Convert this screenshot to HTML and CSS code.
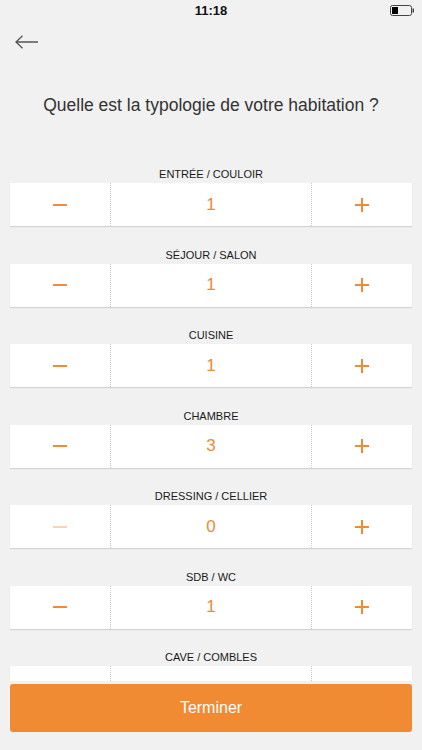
FILE: index.html
```html
<!DOCTYPE html>
<html lang="fr">

<head>
    <meta charset="UTF-8" />
    <meta name="viewport" content="width=device-width, initial-scale=1.0" />
    <title>Typologie</title>
    <link rel="stylesheet" href="styles.css">
</head>

<body>
    <div class="app">
        <!-- barre de statut -->
        <div class="status-bar">
            <span class="time">11:18</span>
            <svg class="battery" width="25" height="11" viewBox="0 0 25 11">
                <rect x="0.5" y="0.5" width="21" height="10" rx="2" fill="none" stroke="#444" stroke-width="1" />
                <rect x="2" y="2" width="6" height="7" fill="#000" />
                <rect x="22.5" y="3.5" width="1.5" height="4" fill="#444" />
            </svg>
        </div>

        <!-- navigation -->
        <div class="nav">
            <svg class="back" width="24" height="14" viewBox="0 0 24 14">
                <path d="M1 7 H23 M7.5 0.8 L1 7 L7.5 13.2" fill="none" stroke="#555" stroke-width="1.3" />
            </svg>
        </div>

        <h1 class="title">Quelle est la typologie de votre habitation ?</h1>

        <!-- liste des pièces -->
        <div class="list">
            <div class="group">
                <div class="label">ENTRÉE / COULOIR</div>
                <div class="stepper">
                    <div class="btn"><span class="minus"></span></div>
                    <div class="value">1</div>
                    <div class="btn"><span class="plus"></span></div>
                </div>
            </div>
            <div class="group">
                <div class="label">SÉJOUR / SALON</div>
                <div class="stepper">
                    <div class="btn"><span class="minus"></span></div>
                    <div class="value">1</div>
                    <div class="btn"><span class="plus"></span></div>
                </div>
            </div>
            <div class="group">
                <div class="label">CUISINE</div>
                <div class="stepper">
                    <div class="btn"><span class="minus"></span></div>
                    <div class="value">1</div>
                    <div class="btn"><span class="plus"></span></div>
                </div>
            </div>
            <div class="group">
                <div class="label">CHAMBRE</div>
                <div class="stepper">
                    <div class="btn"><span class="minus"></span></div>
                    <div class="value">3</div>
                    <div class="btn"><span class="plus"></span></div>
                </div>
            </div>
            <div class="group">
                <div class="label">DRESSING / CELLIER</div>
                <div class="stepper">
                    <div class="btn disabled"><span class="minus"></span></div>
                    <div class="value">0</div>
                    <div class="btn"><span class="plus"></span></div>
                </div>
            </div>
            <div class="group">
                <div class="label">SDB / WC</div>
                <div class="stepper">
                    <div class="btn"><span class="minus"></span></div>
                    <div class="value">1</div>
                    <div class="btn"><span class="plus"></span></div>
                </div>
            </div>
            <div class="group">
                <div class="label">CAVE / COMBLES</div>
                <div class="stepper">
                    <div class="btn disabled"><span class="minus"></span></div>
                    <div class="value">0</div>
                    <div class="btn"><span class="plus"></span></div>
                </div>
            </div>
        </div>

        <div class="footer">
            <button class="done">Terminer</button>
        </div>
    </div>
</body>

</html>
```

FILE: styles.css
```css
body {
    margin: 0;
    padding: 0;
    background-color: #f1f1f1;
    font-family: "Liberation Sans", Arial, sans-serif;
    color: #222;
}

.app {
    height: 750px;
    display: flex;
    flex-direction: column;
    overflow: hidden;
}

/* barre de statut */
.status-bar {
    height: 20px;
    flex: none;
    display: flex;
    justify-content: center;
    align-items: center;
    position: relative;
}

.time {
    font-size: 13px;
    font-weight: bold;
    color: #111;
}

.battery {
    position: absolute;
    right: 7px;
    top: 5px;
}

.nav {
    height: 44px;
    flex: none;
    display: flex;
    align-items: center;
    padding-left: 15px;
}

.title {
    flex: none;
    margin: 30px 0 0;
    font-size: 17.5px;
    line-height: 22px;
    font-weight: normal;
    text-align: center;
    color: #333;
}

/* liste */
.list {
    flex: 1;
    overflow: hidden;
    padding: 51px 10px 0;
}

.group {
    margin-bottom: 21.5px;
}

.label {
    font-size: 11px;
    line-height: 14px;
    text-align: center;
    margin-bottom: 2px;
    color: #1a1a1a;
}

.stepper {
    height: 43px;
    display: flex;
    background-color: #fff;
    box-shadow: 0 1px 1px rgba(0, 0, 0, 0.12);
}

.btn {
    width: 100px;
    display: flex;
    justify-content: center;
    align-items: center;
}

.value {
    flex: 1;
    display: flex;
    justify-content: center;
    align-items: center;
    font-size: 17px;
    color: #f08a33;
    border-left: 1px dotted #c8c8c8;
    border-right: 1px dotted #c8c8c8;
}

.minus {
    width: 14px;
    height: 2px;
    background-color: #f08a33;
}

.disabled .minus {
    background-color: #f9d4b6;
}

.plus {
    width: 14px;
    height: 14px;
    position: relative;
}

.plus::before,
.plus::after {
    content: "";
    position: absolute;
    background-color: #f08a33;
}

.plus::before {
    left: 0;
    top: 6px;
    width: 14px;
    height: 2px;
}

.plus::after {
    left: 6px;
    top: 0;
    width: 2px;
    height: 14px;
}

/* bouton */
.footer {
    flex: none;
    padding: 3px 10px 18px;
}

.done {
    width: 100%;
    height: 48px;
    border: none;
    border-radius: 3px;
    background-color: #f08a33;
    color: #fff;
    font-family: "Liberation Sans", Arial, sans-serif;
    font-size: 16px;
}
```
